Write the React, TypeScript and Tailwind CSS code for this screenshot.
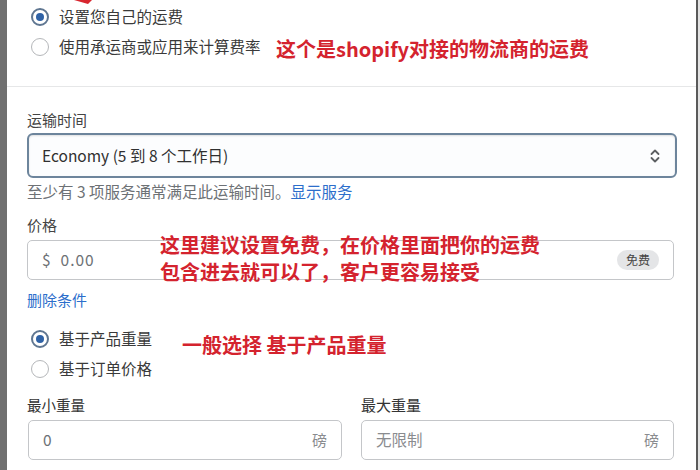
import React from 'react';

const font = { fontFamily: '"Noto Sans CJK SC", "Noto Sans", sans-serif' };

const Radio: React.FC<{ checked?: boolean; label: string }> = ({ checked, label }) => (
  <div className="flex items-center h-[30px] gap-[10px]">
    {checked ? (
      <span className="w-[18px] h-[18px] rounded-full border-[2px] border-[#5f7691] flex items-center justify-center bg-white">
        <span className="w-[8px] h-[8px] rounded-full bg-[#2f62a6]" />
      </span>
    ) : (
      <span className="w-[18px] h-[18px] rounded-full border-[1.5px] border-[#b5b7ba] bg-white" />
    )}
    <span className="text-[15.5px] text-[#3a3a3a]">{label}</span>
  </div>
);

const Field: React.FC<{ value: React.ReactNode; suffix?: React.ReactNode; muted?: boolean }> = ({ value, suffix, muted }) => (
  <div className="h-[40px] rounded-[5px] border border-[#c4c6c9] bg-white flex items-center justify-between pl-[14px] pr-[14px]">
    <span className={muted ? 'text-[15.5px] text-[#8a8c8f]' : 'text-[15.5px] text-[#6d7175]'}>{value}</span>
    {suffix}
  </div>
);

export default function App() {
  return (
    <div className="w-[700px] h-[470px] overflow-hidden bg-white flex relative" style={font}>
      <div className="w-[7px] bg-[#707070]" />

      <div className="flex-1 flex flex-col">
        <div className="pl-[24px] pt-[2px] pb-[24px] flex flex-col">
          <Radio checked label="设置您自己的运费" />
          <Radio label="使用承运商或应用来计算费率" />
        </div>
        <div className="h-[1px] bg-[#e6e7e8]" />

        <div className="pl-[20px] pr-[19px] flex flex-col">
          <div className="mt-[23px] h-[20px] leading-[20px] text-[15px] text-[#444]">运输时间</div>
          <div className="mt-[3px] h-[45px] rounded-[6px] border-[2px] border-[#6d859c] bg-[#fcfdfe] shadow-[inset_0_1px_2px_rgba(0,0,0,0.12)] flex items-center justify-between pl-[13px] pr-[14px]">
            <span className="text-[15.5px] text-[#303030]">Economy (5 到 8 个工作日)</span>
            <svg width="12" height="16" viewBox="0 0 12 16" fill="none" stroke="#5c5f62" strokeWidth="1.8" strokeLinecap="round" strokeLinejoin="round">
              <path d="M2.5 6 L6 2.5 L9.5 6" />
              <path d="M2.5 10 L6 13.5 L9.5 10" />
            </svg>
          </div>
          <div className="mt-[3px] h-[20px] leading-[20px] text-[15.5px] text-[#6d7175] whitespace-nowrap">
            至少有 3 项服务通常满足此运输时间。<span className="text-[#2c6ecb]">显示服务</span>
          </div>

          <div className="mt-[14px] h-[20px] leading-[20px] text-[15px] text-[#444]">价格</div>
          <div className="mt-[5px] w-[647px]">
            <Field
              value={<span className="tracking-[1px]">$&nbsp;&nbsp;0.00</span>}
              suffix={
                <span className="h-[20px] px-[9px] rounded-full bg-[#e4e5e7] text-[12px] leading-[20px] text-[#444]">免费</span>
              }
            />
          </div>
          <div className="mt-[10px] h-[20px] leading-[20px] text-[15px] text-[#2c6ecb]">删除条件</div>

          <div className="mt-[14px] pl-[4px] flex flex-col">
            <Radio checked label="基于产品重量" />
            <Radio label="基于订单价格" />
          </div>

          <div className="mt-[11px] grid grid-cols-[315px_313px] gap-[19px]">
            <div className="flex flex-col">
              <div className="h-[20px] leading-[20px] text-[14.5px] text-[#333]">最小重量</div>
              <div className="mt-[5px] pl-[1px]">
                <Field value="0" suffix={<span className="text-[15px] text-[#8a8c8f]">磅</span>} />
              </div>
            </div>
            <div className="flex flex-col">
              <div className="h-[20px] leading-[20px] text-[15px] text-[#333]">最大重量</div>
              <div className="mt-[5px]">
                <Field value="无限制" muted suffix={<span className="text-[15px] text-[#8a8c8f]">磅</span>} />
              </div>
            </div>
          </div>
        </div>
      </div>

      <div className="w-[2px] bg-[#5a5a5a]" />
      <div className="w-[2px] bg-[#e2e2e2]" />

      {/* annotations */}
      <svg className="absolute left-[70px] top-0" width="30" height="6" viewBox="0 0 30 6">
        <path d="M4 0 L22 0 L18 4 Z" fill="#d8262f" />
      </svg>
      <div className="absolute left-[276px] top-[35px] text-[20px] font-bold leading-[28px] text-[#d4232e]">
        这个是shopify对接的物流商的运费
      </div>
      <div className="absolute left-[160px] top-[231px] text-[20px] font-bold leading-[27px] text-[#d4232e]">
        <div>这里建议设置免费，在价格里面把你的运费</div>
        <div>包含进去就可以了，客户更容易接受</div>
      </div>
      <div className="absolute left-[182px] top-[331px] text-[20px] font-bold leading-[28px] text-[#d4232e]">
        一般选择 基于产品重量
      </div>
    </div>
  );
}
